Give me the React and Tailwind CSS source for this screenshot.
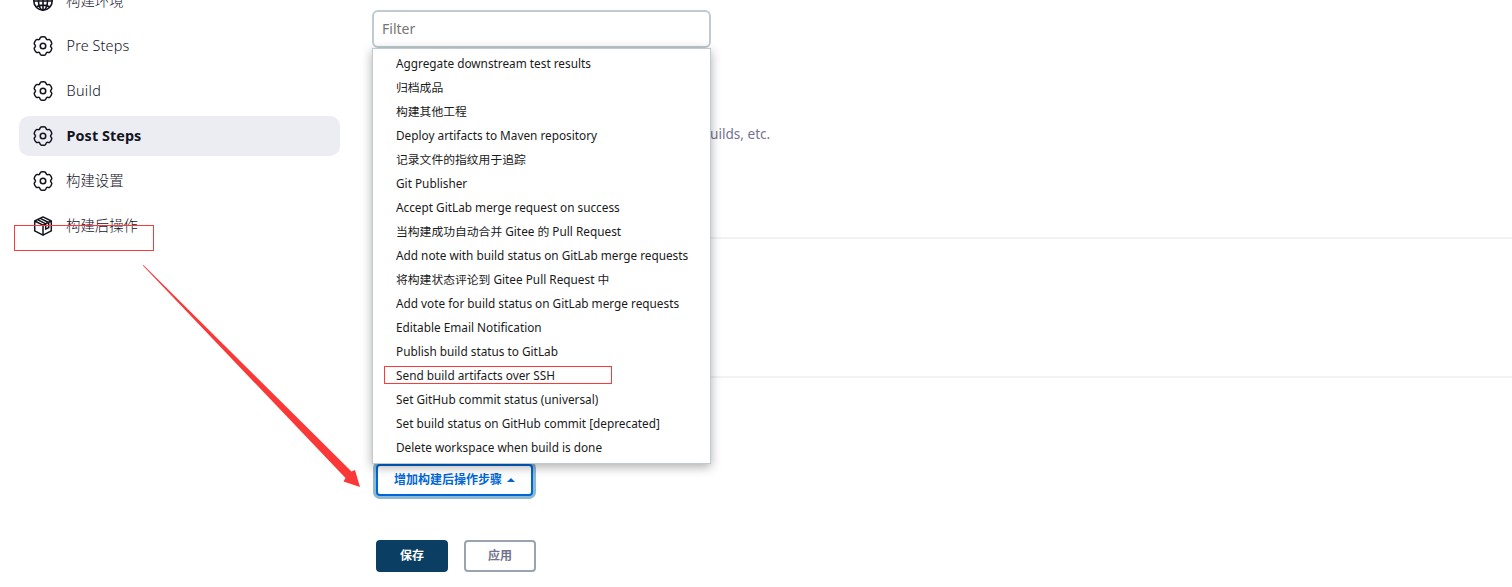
import React from "react";

const point = (deg, r) => {
  const a = (deg * Math.PI) / 180;
  return `${(12 + r * Math.cos(a)).toFixed(2)} ${(12 + r * Math.sin(a)).toFixed(2)}`;
};

const gearPath =
  [-90, -30, 30, 90, 150, 210]
    .map(
      (a, i) =>
        `${i ? "L" : "M"}${point(a - 13, 10.7)} Q${point(a, 11.2)} ${point(a + 13, 10.7)} Q${point(a + 19, 10.4)} ${point(a + 22, 9.4)} Q${point(a + 30, 8.1)} ${point(a + 38, 9.4)} Q${point(a + 41, 10.4)} ${point(a + 47, 10.7)}`
    )
    .join(" ") + "Z";

function Gear() {
  return (
    <svg viewBox="0 0 24 24" className="size-[22px] shrink-0" fill="none" stroke="#14141f" strokeWidth="1.7" strokeLinejoin="round">
      <path d={gearPath} transform="translate(12 12) scale(.94) translate(-12 -12)" />
      <circle cx="12" cy="12" r="3" />
    </svg>
  );
}

function Globe() {
  return (
    <svg viewBox="0 0 22 22" className="size-[22px] shrink-0" fill="none" stroke="#14141f" strokeWidth="1.6">
      <circle cx="11" cy="11" r="9.2" />
      <ellipse cx="11" cy="11" rx="4.5" ry="9.2" />
      <path d="M11 2v18M2 11h18M4.500 5.200c3.500 2.200 9.500 2.200 13 0M4.500 16.800c3.500-2.200 9.500-2.200 13 0" />
    </svg>
  );
}

function Package() {
  return (
    <svg viewBox="0 0 22 22" className="size-[22px] shrink-0" fill="none" stroke="#14141f" strokeWidth="1.5" strokeLinejoin="round" strokeLinecap="round">
      <path d="M11 1.900 19.300 6v9.800L11 20.200 2.700 15.800V6ZM2.700 6 11 10.200 19.300 6M11 10.200v10M5.500 4.700l8.300 4.200M8.300 3.300l8.300 4.200M13.700 9v5.200l3-1.500V7.500" />
    </svg>
  );
}

const nav = [
  { label: "构建环境", icon: Globe },
  { label: "Pre Steps", icon: Gear, tracking: "tracking-[0.12px] pl-[0.6px]" },
  { label: "Build", icon: Gear, tracking: "tracking-[0.3px] pl-[0.6px]" },
  { label: "Post Steps", icon: Gear, active: true, tracking: "pl-[0.6px] tracking-[0.05px]" },
  { label: "构建设置", icon: Gear },
  { label: "构建后操作", icon: Package, boxed: true },
];

const steps = [
  "Aggregate downstream test results",
  "归档成品",
  "构建其他工程",
  "Deploy artifacts to Maven repository",
  "记录文件的指纹用于追踪",
  "Git Publisher",
  "Accept GitLab merge request on success",
  "当构建成功自动合并 Gitee 的 Pull Request",
  "Add note with build status on GitLab merge requests",
  "将构建状态评论到 Gitee Pull Request 中",
  "Add vote for build status on GitLab merge requests",
  "Editable Email Notification",
  "Publish build status to GitLab",
  "Send build artifacts over SSH",
  "Set GitHub commit status (universal)",
  "Set build status on GitHub commit [deprecated]",
  "Delete workspace when build is done",
];

function Sidebar() {
  return (
    <nav className="-mt-[19px] flex w-[340px] shrink-0 flex-col gap-[5px] pl-[19px]">
      {nav.map(({ label, icon: Icon, active, boxed, tracking }) => (
        <div
          key={label}
          className={`relative flex h-10 shrink-0 items-center gap-3 rounded-[10px] pl-[13px] text-[14.4px] text-[#14141f] ${active ? "bg-[#ecedf3] font-bold" : "font-light"}`}
        >
          <Icon />
          <span className={`whitespace-nowrap ${tracking || ""}`}>{label}</span>
          {boxed && <span className="absolute top-[19px] -left-[5px] h-[26px] w-[140px] border border-[#fb3b3b]" />}
        </div>
      ))}
    </nav>
  );
}

function StepMenu() {
  return (
    <div className="absolute top-[10px] left-[32px] z-10 w-[339px]">
      <input
        placeholder="Filter"
        className="block h-[38px] w-full rounded-[6px] border-2 border-[#bfcbd0] bg-white px-2 pb-[2px] text-[14px] text-[#333] outline-none placeholder:text-[#757575]"
      />
      <ul className="h-[416px] border border-[#bfcbd0] bg-white pt-[2px] text-[11.8px] text-[#1a1a1a] shadow-[0_3px_10px_rgba(0,0,0,0.32)]">
        {steps.map((s) => (
          <li key={s} className="relative h-6 pl-[23px] leading-6 whitespace-nowrap">
            <span>{s}</span>
            {s.startsWith("Send") && <span className="absolute top-[3px] left-[11px] h-[18px] w-[228px] border border-[#fb3b3b]" />}
          </li>
        ))}
      </ul>
    </div>
  );
}

export default function App() {
  return (
    <div className="relative flex h-[587px] w-[1512px] overflow-hidden bg-white font-['Noto_Sans','Noto_Sans_CJK_SC',sans-serif]">
      <Sidebar />
      <main className="relative flex flex-1 flex-col pl-9">
        <StepMenu />
        <div className="-ml-9 flex h-[237px] items-start pt-[124px] pl-[370px] text-[13.6px] leading-5 text-[#737390]">
          <p>uilds, etc.</p>
        </div>
        <hr className="h-[2px] border-0 bg-[#f1f1f6]" />
        <hr className="mt-[137px] h-[2px] border-0 bg-[#f1f1f6]" />
        <button className="mt-[86px] flex h-8 w-[157px] shrink-0 items-center justify-center gap-[5px] rounded-[4px] border-2 border-[#0066d6] bg-white text-[12px] font-bold whitespace-nowrap text-[#0066d6] shadow-[0_0_0_3px_#8bb8d3]">
          增加构建后操作步骤
          <svg viewBox="0 0 8 4" className="h-1 w-2">
            <path d="M0 4 4 0l4 4Z" fill="#0066d6" />
          </svg>
        </button>
        <div className="mt-11 flex gap-4 text-[12px] font-bold">
          <button className="h-8 w-[72px] rounded-[4px] bg-[#0a3f63] text-white">保存</button>
          <button className="h-8 w-[72px] rounded-[4px] border-2 border-[#98a5b1] bg-white text-[#737390]">应用</button>
        </div>
      </main>
      <svg viewBox="0 0 220 226" className="pointer-events-none absolute top-[263px] left-[141px] z-20 h-[226px] w-[220px]">
        <path d="M1.800 2.600 204.500 215 202.500 218.500 219 224 214 207 210.500 208.500 2.400 2Z" fill="#fb3838" />
      </svg>
    </div>
  );
}
